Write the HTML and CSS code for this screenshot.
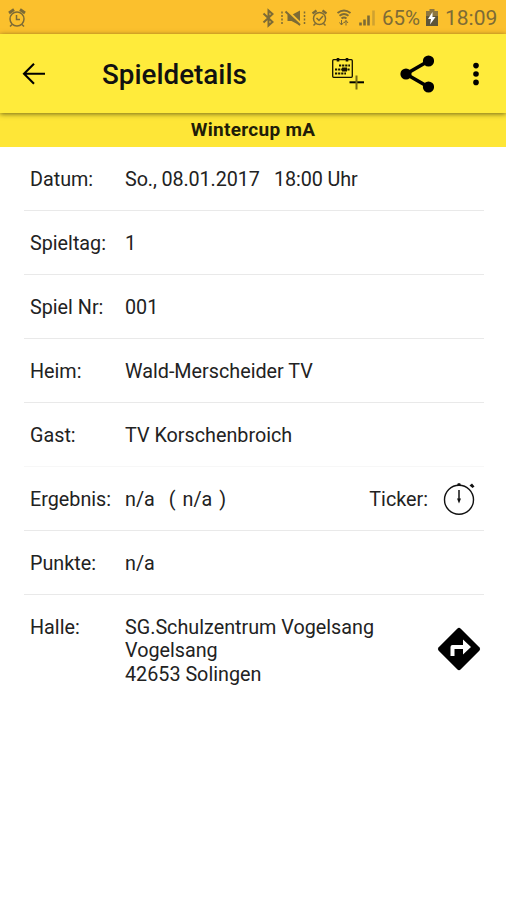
FILE: index.html
```html
<!DOCTYPE html>
<html lang="de">
<head>
<meta charset="utf-8">
<title>Spieldetails</title>
<link rel="stylesheet" href="styles.css">
</head>
<body>
<div class="status">
  <svg class="clock" width="18" height="20" viewBox="0 0 18 20" fill="none" stroke="currentColor" stroke-width="1.5"><circle cx="9" cy="11" r="7"/><path d="M8.500 7v4.500H12M4 16.500l-2 2M14 16.500l2 2"/><path d="M1 5l5-3.500M17 5l-5-3.500" stroke-width="2.800"/></svg>
  <svg class="icons" width="118" height="24" viewBox="260 6 118 24" fill="none" stroke="currentColor" stroke-width="1.500">
    <path d="M264.500 13.500l9 8.500-4 3.500v-15l4 3.500-9 8.500" stroke-width="2"/>
    <path d="M283 11.500v13M305.500 11.500v13" stroke-dasharray="2 1.500"/>
    <path d="M288.500 15h4l8.500-4.500v15l-8.500-4.500h-4z" fill="currentColor" stroke="none"/><path d="M288 10.500l14 13.500" stroke="#fbc02d" stroke-width="2.500"/><path d="M286.500 11.500l14.500 13.500" stroke-width="2"/>
    <circle cx="320.500" cy="18.500" r="6"/><path d="M317.500 18l2.500 2.500 4-4.500M316.500 23.500l-2 2M324.500 23.500l2 2"/><path d="M313.500 13.500l4-3M327.500 13.500l-4-3" stroke-width="2.200"/>
    <path d="M338.500 13q6.500-5 13 0M340.500 15.800q4.500-3.500 9 0M342.500 18.500q2.500-2 5 0" stroke-width="1.900"/><path d="M342.500 20v5M340.500 22.500l2 2.500 2-2.500M347 25.500v-5M345 23l2-2.500 2 2.500" stroke-width="1"/>
    <path d="M361.500 25.500v-3M365.500 25.500v-6M369.500 25.500v-10" stroke-width="2.600"/><path d="M374.500 25.500v-15" stroke-width="2.600" opacity=".35"/>
  </svg>
  <span class="percent">65%</span>
  <svg class="battery" width="12" height="18" viewBox="0 0 12 18"><path fill="#8d7640" d="M3.500 2V0h5v2H12v6H0V2z"/><path fill="#5e5539" d="M0 7h12v10H0z"/><path fill="#fff" d="M6.500 3L2 10h3l-1 5.500L9.500 8H6.500z"/></svg>
  <span class="time">18:09</span>
</div>
<header class="bar">
  <svg class="back" width="24" height="24" viewBox="0 0 24 24" fill="none" stroke="#000" stroke-width="2.100"><path d="M23 11.700H2.500M12 1.700l-10 10 10 10"/></svg>
  <h1>Spieldetails</h1>
  <svg class="calendar" width="34" height="34" viewBox="0 0 34 34" fill="none" stroke="#151200" stroke-width="1.300">
    <rect x="1.700" y="2.700" width="19.600" height="17.600" rx="1"/><path d="M7 1v3.500M16 1v3.500" stroke-width="2.600"/>
    <path d="M8 8.500h11M4 12.500h15M4 16.500h11" stroke-width="2" stroke-dasharray="2.200 .9"/><path d="M11 10.500h5v4h-5z" fill="#151200" stroke="none"/>
    <path d="M18.500 25.300H33" stroke="#000" stroke-width="2"/><path d="M25.500 18.500v14" stroke="#776b12" stroke-width="2"/>
  </svg>
  <svg class="share" width="34" height="38" viewBox="0 0 34 38"><path d="M28.500 6L6 19l22.500 13" fill="none" stroke="#000" stroke-width="3.600"/><circle cx="28.500" cy="6" r="5.600"/><circle cx="6" cy="19" r="5.600"/><circle cx="28.500" cy="32" r="5.600"/></svg>
  <svg class="more" width="8" height="24" viewBox="0 0 8 24"><circle cx="4" cy="3.600" r="2.800"/><circle cx="4" cy="12" r="2.800"/><circle cx="4" cy="20.400" r="2.800"/></svg>
</header>
<h2 class="cup">Wintercup mA</h2>
<main class="details">
  <div class="row"><span class="label">Datum:</span><span class="value date">So., 08.01.2017 &nbsp; 18:00 Uhr</span></div>
  <div class="row"><span class="label">Spieltag:</span><span class="value">1</span></div>
  <div class="row"><span class="label">Spiel Nr:</span><span class="value">001</span></div>
  <div class="row"><span class="label">Heim:</span><span class="value">Wald-Merscheider TV</span></div>
  <div class="row faint"><span class="label">Gast:</span><span class="value">TV Korschenbroich</span></div>
  <div class="row"><span class="label">Ergebnis:</span><span class="value score">n/a<span class="extra">( n/a )</span></span><span class="ticker">Ticker:</span>
    <svg class="stopwatch" width="34" height="34" viewBox="0 0 34 34" fill="none" stroke="#111"><circle cx="16" cy="17.700" r="14.500" stroke-width="1.400"/><path d="M16 8v10" stroke-width="1.500"/><path d="M14 16.500h4l-2 5z" fill="#111" stroke="none"/><path d="M13.800 4l1-2.700h2.400l1 2.700zM26.500 3.500l2.500-2 2.500 3-2 1.500z" fill="#111" stroke="none"/></svg>
  </div>
  <div class="row"><span class="label">Punkte:</span><span class="value">n/a</span></div>
  <div class="row last"><span class="label">Halle:</span><span class="value">SG.Schulzentrum Vogelsang<br>Vogelsang<br>42653 Solingen</span>
    <svg class="route" width="44" height="44" viewBox="0 0 44 44"><path d="M20.200 1.700q1.800-1.700 3.600 0l18.500 18.500q1.700 1.800 0 3.600L23.800 42.300q-1.800 1.700-3.600 0L1.700 23.800q-1.700-1.800 0-3.600z"/><path fill="#fff" d="M13.500 29V20q0-2 2-2H26v-5.500l8 7.500-8 7.500V22h-8.500v7z"/></svg>
  </div>
</main>
</body>
</html>
```
FILE: styles.css
```css
* { box-sizing: border-box; }
body {
  margin: 0;
  min-height: 900px;
  background: #fff;
  color: #222;
  font: 19.75px/23.4px Roboto, sans-serif;
}
svg { display: block; flex: none; }
h1, h2 { margin: 0; }
.status {
  display: flex;
  align-items: center;
  height: 34px;
  padding: 2px 9px 0 8px;
  background: #fbc02d;
  color: #7d6b36;
}
.icons { margin-left: auto; margin-right: 5px; }
.percent { width: 38px; margin-right: 6px; font-size: 20.5px; white-space: nowrap; }
.battery { margin-right: 7px; }
.time { width: 52px; font-size: 21px; white-space: nowrap; }
.percent, .time { padding-top: 2px; }
.bar {
  position: relative;
  display: flex;
  align-items: center;
  height: 79px;
  padding: 0 26px 0 22px;
  background: #ffeb3b;
  color: #111;
  box-shadow: 0 1px 5px rgba(0, 0, 0, .55);
}
.bar h1 { margin-left: 56px; font-size: 27.8px; line-height: 32px; font-weight: 500; margin-top: 3px; }
.calendar { margin-left: auto; }
.share { margin-left: 35px; }
.more { margin-left: 38px; }
.cup {
  height: 34px;
  background: #fee637;
  color: #211d08;
  font-size: 19px;
  line-height: 34px;
  font-weight: 700;
  letter-spacing: .3px;
  text-align: center;
}
.details { margin: 0 22px 0 24px; }
.row {
  display: flex;
  align-items: flex-start;
  height: 64px;
  padding: 21px 0 0 6px;
  border-bottom: 1px solid #e9e9e9;
}
.faint { border-color: #f7f7f7; }
.label { flex: none; width: 95px; }
.value { white-space: nowrap; }
.date { letter-spacing: -.1px; }
.extra { margin-left: 14px; word-spacing: 2px; }
.ticker { margin-left: auto; margin-right: 15px; }
.stopwatch { margin: -6px 7px 0 0; }
.last { height: 100px; border: 0; }
.route { margin: 11px 3px 0 auto; }
```
